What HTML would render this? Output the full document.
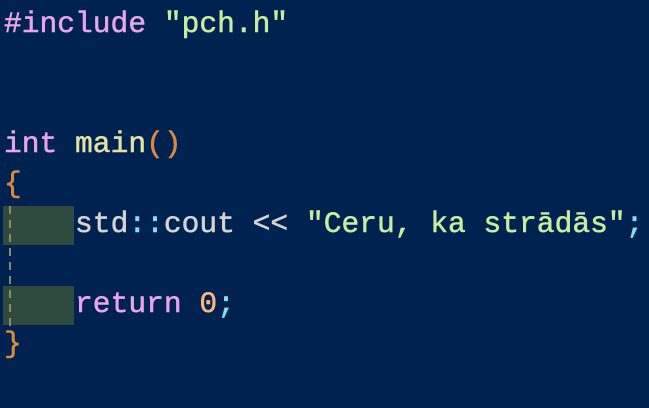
<!DOCTYPE html>
<html><head><style>
html,body{margin:0;padding:0}
body{width:649px;height:408px;background:#002251;overflow:hidden;position:relative;font-family:"Liberation Mono","DejaVu Sans Mono",monospace;font-size:29.6px;color:#d4d4d4}
.l{position:absolute;left:4px;height:40px;line-height:40px;white-space:pre;-webkit-text-stroke:0.5px currentColor}
.k{color:#e8a6e8}.f{color:#e4e2a4}.p{color:#d88a3e}.s{color:#c8eca0}.c{color:#7fe0f0}.n{color:#f6b87e}.w{color:#d4d4d4}
.g{position:absolute;left:3px;width:71px;height:39px;background:#2f4a3f}
.d{position:absolute;left:9px;width:2px;background:repeating-linear-gradient(#8a8a6a 0 8px,transparent 8px 14px)}
</style></head><body>
<div class="g" style="top:206px"></div>
<div class="g" style="top:286px"></div>
<div class="d" style="top:206px;height:120px"></div>
<div class="l" style="top:4px"><span class="k">#include</span> <span class="s">"pch.h"</span></div>
<div class="l" style="top:124px"><span class="k">int</span> <span class="f">main</span><span class="p">()</span></div>
<div class="l" style="top:164px"><span class="p">{</span></div>
<div class="l" style="top:204px">    <span class="w">std</span><span class="c">::</span><span class="w">cout &lt;&lt; </span><span class="s">"Ceru, ka strādās"</span><span class="c">;</span></div>
<div class="l" style="top:284px">    <span class="k">return</span> <span class="n">0</span><span class="c">;</span></div>
<div class="l" style="top:324px"><span class="p">}</span></div>
</body></html>
